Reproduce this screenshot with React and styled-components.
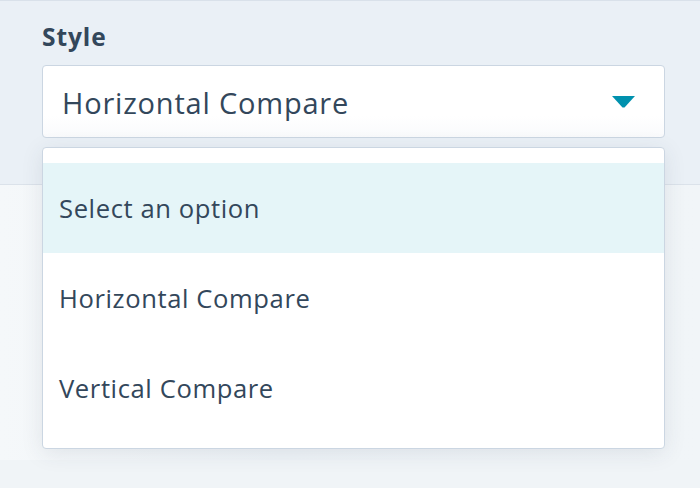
import React from 'react'
import styled, { createGlobalStyle } from 'styled-components'

const GlobalStyle = createGlobalStyle`
  html, body {
    margin: 0;
    padding: 0;
  }
  body {
    background: #f0f4f7;
    font-family: 'Open Sans', 'Liberation Sans', sans-serif;
    color: #33475b;
  }
`

const Page = styled.div`
  width: 700px;
  height: 488px;
  display: flex;
  flex-direction: column;
  overflow: hidden;
`

const TopPanel = styled.div`
  position: relative;
  box-sizing: border-box;
  height: 185px;
  background: #eaf0f6;
  border-top: 1px solid #d9e1ea;
  border-bottom: 1px solid #dbe2ea;
  padding: 20px 35px 0 42px;
  display: flex;
  flex-direction: column;
`

const Label = styled.label`
  font-size: 24.5px;
  font-weight: 700;
  letter-spacing: 0.9px;
  line-height: 32px;
  color: #33475b;
  margin-bottom: 12px;
`

const SelectBox = styled.div`
  box-sizing: border-box;
  height: 73px;
  background: linear-gradient(#ffffff 70%, #f9fafc);
  border: 1px solid #cbd6e2;
  border-radius: 4px;
  display: flex;
  align-items: center;
  justify-content: space-between;
  padding: 2px 29px 0 19px;
`

const SelectValue = styled.span`
  font-size: 29px;
  letter-spacing: 0.8px;
  color: #33475b;
`

const Caret = styled.svg`
  width: 23px;
  height: 12px;
  display: block;
  margin-top: -2px;
`

const Menu = styled.ul`
  position: absolute;
  left: 42px;
  top: 146px;
  width: 623px;
  box-sizing: border-box;
  margin: 0;
  padding: 15px 0 15px;
  list-style: none;
  background: #ffffff;
  border: 1px solid #cbd6e2;
  border-radius: 4px;
  box-shadow: 0 4px 22px rgba(45, 62, 80, 0.1);
  z-index: 2;
`

const Option = styled.li`
  height: 90px;
  display: flex;
  align-items: center;
  padding: 0 16px;
  font-size: 25.6px;
  letter-spacing: 0.6px;
  color: #33475b;
  background: ${(p) => (p.$active ? '#e5f5f8' : 'transparent')};
`

const Lower = styled.div`
  height: 275px;
  background: linear-gradient(90deg, #f5f8fa, #eef3f7 40%, #f1f5f8);
`

const Bottom = styled.div`
  flex: 1;
  background: #f0f4f7;
`

const options = ['Select an option', 'Horizontal Compare', 'Vertical Compare']

export default function App() {
  return (
    <>
      <GlobalStyle />
      <Page>
        <TopPanel>
          <Label>Style</Label>
          <SelectBox>
            <SelectValue>Horizontal Compare</SelectValue>
            <Caret viewBox="0 0 23 12">
              <path d="M0 0 H23 L12.5 11.5 H10.5 Z" fill="#0091ae" />
            </Caret>
          </SelectBox>
          <Menu>
            {options.map((o, i) => (
              <Option key={o} $active={i === 0}>
                {o}
              </Option>
            ))}
          </Menu>
        </TopPanel>
        <Lower />
        <Bottom />
      </Page>
    </>
  )
}
